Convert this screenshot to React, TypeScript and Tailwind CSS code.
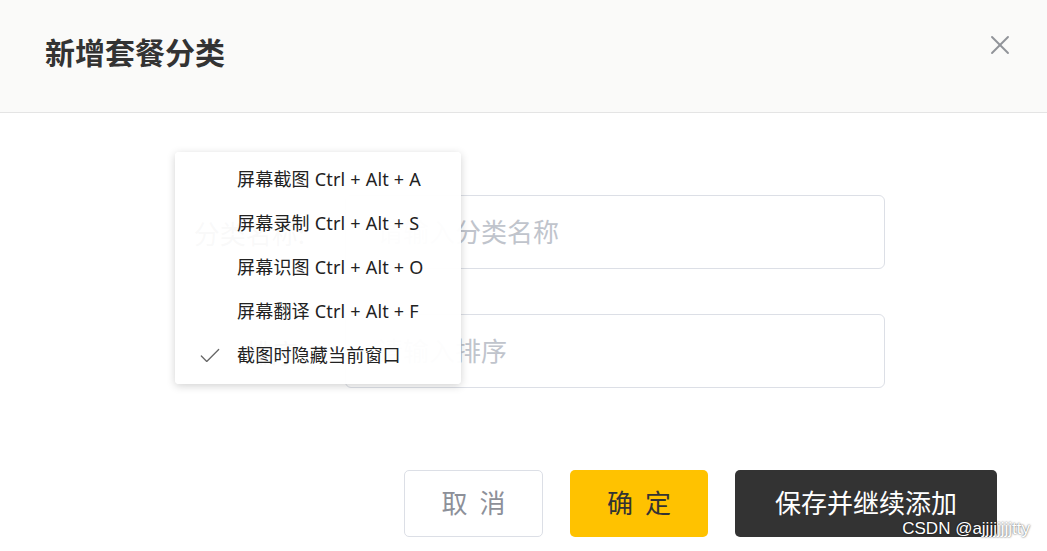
import { Check, X } from "lucide-react";

const cjk = { fontFamily: '"Noto Sans CJK SC", "Noto Sans", sans-serif' };
const menuFont = { fontFamily: '"Noto Sans", "Noto Sans CJK SC", sans-serif' };

const menuItems = [
  { label: "屏幕截图 Ctrl + Alt + A", checked: false },
  { label: "屏幕录制 Ctrl + Alt + S", checked: false },
  { label: "屏幕识图 Ctrl + Alt + O", checked: false },
  { label: "屏幕翻译 Ctrl + Alt + F", checked: false },
  { label: "截图时隐藏当前窗口", checked: true },
];

function Field({ label, placeholder }: { label: string; placeholder: string }) {
  return (
    <div className="flex items-center">
      <label className="w-[345px] pr-[40px] text-right text-[26px] text-[#606266]">{label}</label>
      <input
        placeholder={placeholder}
        className="h-[74px] w-[540px] rounded-[6px] border border-[#dcdfe6] pb-[4px] pl-[31px] text-[26px] text-[#606266] outline-none placeholder:text-[#c0c4cc]"
        style={cjk}
      />
    </div>
  );
}

export default function App() {
  return (
    <div className="relative h-[551px] w-[1047px] overflow-hidden bg-white" style={cjk}>
      <header className="flex h-[113px] items-center justify-between border-b border-[#e4e4e4] bg-[#fafaf9] pl-[45px] pr-[31px]">
        <h1 className="pb-[10px] text-[30px] font-bold text-[#333]">新增套餐分类</h1>
        <button className="mb-[22px] text-[#909399]">
          <X size={32} strokeWidth={1.4} />
        </button>
      </header>

      <form className="flex flex-col gap-[45px] pt-[82px]">
        <Field label="分类名称:" placeholder="请输入分类名称" />
        <Field label="排序:" placeholder="请输入排序" />
      </form>

      <div className="flex justify-end gap-[27px] pr-[50px] pt-[82px]">
        <button className="h-[67px] w-[139px] rounded-[5px] border border-[#dcdfe6] bg-white pb-[4px] text-[26px] tracking-[12px] text-[#8d9099]">
          <span className="pl-[12px]">取消</span>
        </button>
        <button className="h-[67px] w-[138px] rounded-[5px] bg-[#ffc200] pb-[4px] text-[26px] tracking-[12px] text-[#333]">
          <span className="pl-[12px]">确定</span>
        </button>
        <button className="h-[67px] w-[262px] rounded-[5px] bg-[#333] pb-[4px] text-[26px] text-white">保存并继续添加</button>
      </div>

      <div
        className="absolute left-[175px] top-[152px] w-[286px] rounded-[4px] bg-white/[0.96] pb-[5px] pt-[7px] shadow-[0_2px_8px_rgba(0,0,0,0.18)]"
        style={menuFont}
      >
        {menuItems.map((item) => (
          <div key={item.label} className="flex h-[44px] items-center pb-[3px] text-[18px] tracking-[0.2px] text-[#222]">
            <span className="flex w-[62px] justify-center pl-[8px]">
              {item.checked && <Check size={26} strokeWidth={1.2} className="text-[#666]" />}
            </span>
            <span>{item.label}</span>
          </div>
        ))}
      </div>

      <div
        className="absolute bottom-[10px] right-[17px] text-[17px] text-white [text-shadow:0_0_2px_rgba(0,0,0,0.8)]"
        style={{ fontFamily: '"Liberation Sans", Arial, sans-serif' }}
      >
        CSDN @ajjjjjjjjtty
      </div>
    </div>
  );
}
